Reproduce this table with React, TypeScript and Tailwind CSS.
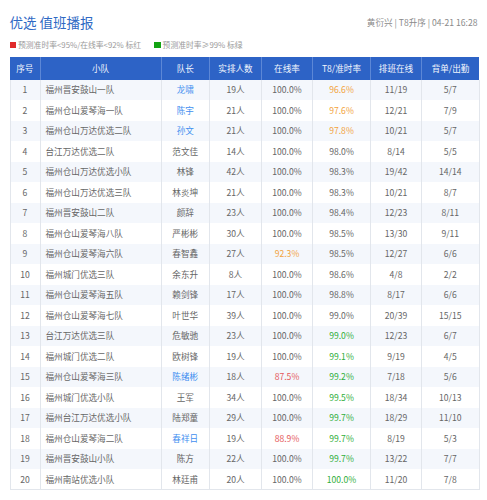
import React from "react";

type Row = {
  no: number;
  team: string;
  leader: string;
  leaderBlue?: boolean;
  people: string;
  online: string;
  onlineColor?: string;
  t8: string;
  t8Color?: string;
  shift: string;
  duty: string;
};

const rows: Row[] = [
  { no: 1, team: "福州晋安鼓山一队", leader: "龙啸", leaderBlue: true, people: "19人", online: "100.0%", t8: "96.6%", t8Color: "text-[#f2a33c]", shift: "11/19", duty: "5/7" },
  { no: 2, team: "福州仓山爱琴海一队", leader: "陈宇", leaderBlue: true, people: "21人", online: "100.0%", t8: "97.6%", t8Color: "text-[#f2a33c]", shift: "12/21", duty: "7/9" },
  { no: 3, team: "福州仓山万达优选二队", leader: "孙文", leaderBlue: true, people: "21人", online: "100.0%", t8: "97.8%", t8Color: "text-[#f2a33c]", shift: "10/21", duty: "5/7" },
  { no: 4, team: "台江万达优选二队", leader: "范文佳", people: "14人", online: "100.0%", t8: "98.0%", shift: "8/14", duty: "5/5" },
  { no: 5, team: "福州仓山万达优选小队", leader: "林锋", people: "42人", online: "100.0%", t8: "98.3%", shift: "19/42", duty: "14/14" },
  { no: 6, team: "福州仓山万达优选三队", leader: "林炎坤", people: "21人", online: "100.0%", t8: "98.3%", shift: "10/21", duty: "8/7" },
  { no: 7, team: "福州晋安鼓山二队", leader: "颜辞", people: "23人", online: "100.0%", t8: "98.4%", shift: "12/23", duty: "8/11" },
  { no: 8, team: "福州仓山爱琴海八队", leader: "严彬彬", people: "30人", online: "100.0%", t8: "98.5%", shift: "13/30", duty: "9/11" },
  { no: 9, team: "福州仓山爱琴海六队", leader: "春智鑫", people: "27人", online: "92.3%", onlineColor: "text-[#f2a33c]", t8: "98.5%", shift: "12/27", duty: "6/6" },
  { no: 10, team: "福州城门优选三队", leader: "余东升", people: "8人", online: "100.0%", t8: "98.6%", shift: "4/8", duty: "2/2" },
  { no: 11, team: "福州仓山爱琴海五队", leader: "赖剑锋", people: "17人", online: "100.0%", t8: "98.8%", shift: "8/17", duty: "6/6" },
  { no: 12, team: "福州仓山爱琴海七队", leader: "叶世华", people: "39人", online: "100.0%", t8: "99.0%", shift: "20/39", duty: "15/15" },
  { no: 13, team: "台江万达优选三队", leader: "危敏驰", people: "23人", online: "100.0%", t8: "99.0%", t8Color: "text-[#2fae3a]", shift: "12/23", duty: "6/7" },
  { no: 14, team: "福州城门优选二队", leader: "欧树锋", people: "19人", online: "100.0%", t8: "99.1%", t8Color: "text-[#2fae3a]", shift: "9/19", duty: "4/5" },
  { no: 15, team: "福州仓山爱琴海三队", leader: "陈绪彬", leaderBlue: true, people: "18人", online: "87.5%", onlineColor: "text-[#e5575a]", t8: "99.2%", t8Color: "text-[#2fae3a]", shift: "7/18", duty: "5/6" },
  { no: 16, team: "福州城门优选小队", leader: "王军", people: "34人", online: "100.0%", t8: "99.5%", t8Color: "text-[#2fae3a]", shift: "18/34", duty: "10/13" },
  { no: 17, team: "福州台江万达优选小队", leader: "陆郑童", people: "29人", online: "100.0%", t8: "99.7%", t8Color: "text-[#2fae3a]", shift: "18/29", duty: "11/10" },
  { no: 18, team: "福州仓山爱琴海二队", leader: "春祥日", leaderBlue: true, people: "19人", online: "88.9%", onlineColor: "text-[#e5575a]", t8: "99.7%", t8Color: "text-[#2fae3a]", shift: "8/19", duty: "5/3" },
  { no: 19, team: "福州晋安鼓山小队", leader: "陈方", people: "22人", online: "100.0%", t8: "99.7%", t8Color: "text-[#2fae3a]", shift: "13/22", duty: "7/7" },
  { no: 20, team: "福州南站优选小队", leader: "林廷甫", people: "20人", online: "100.0%", t8: "100.0%", t8Color: "text-[#2fae3a]", shift: "11/20", duty: "7/8" },
];

const headers = ["序号", "小队", "队长", "实排人数", "在线率", "T8/准时率", "排班在线", "背单/出勤"];
const widths = ["w-[30px]", "w-[121px]", "w-[48.5px]", "w-[52px]", "w-[51px]", "w-[58px]", "w-[51px]", "w-[57.5px]"];

const App = () => {
  return (
    <div className="w-[487px] h-[500px] bg-white px-[9.5px] pt-[13px] font-['Noto_Sans_CJK_SC','Noto_Sans',sans-serif]">
      {/* title */}
      <div className="flex items-center justify-between h-[19px]">
        <h1 className="text-[13.5px] leading-none text-[#2f69c4]">优选 值班播报</h1>
        <div className="text-[8.6px] leading-none text-[#8a8a8a]">黄衍兴 | T8升序 | 04-21 16:28</div>
      </div>

      {/* legend */}
      <div className="flex items-center h-[10px] mt-[8px] text-[7.8px] leading-none text-[#9a9a9a]">
        <span className="w-[6.5px] h-[6.5px] bg-[#e02a2a] mr-[2px]" />
        <span>预测准时率&lt;95%/在线率&lt;92% 标红</span>
        <span className="w-[6.5px] h-[6.5px] bg-[#13a313] ml-[13px] mr-[2px]" />
        <span>预测准时率≥99% 标绿</span>
      </div>

      <table className="mt-[6.5px] w-[469px] table-fixed border-collapse text-[8.6px] text-[#666]">
        <colgroup>
          {widths.map((w, i) => (
            <col key={i} className={w} />
          ))}
        </colgroup>
        <thead>
          <tr className="h-[23px] bg-[#2d63c6]">
            {headers.map((h, i) => (
              <th
                key={h}
                className={`font-normal text-[#f2f6fd] border-[#5c87d6] ${i < headers.length - 1 ? "border-r" : ""}`}
              >
                {h}
              </th>
            ))}
          </tr>
        </thead>
        <tbody className="border border-t-0 border-[#e2e6ec]">
          {rows.map((r, idx) => (
            <tr key={r.no} className={`h-[20.5px] ${idx % 2 === 0 ? "bg-[#f4f7fc]" : "bg-white"}`}>
              <td className="text-center border-r border-[#e2e6ec]">{r.no}</td>
              <td className="text-left pl-[5px] border-r border-[#e2e6ec] whitespace-nowrap">{r.team}</td>
              <td className={`text-center border-r border-[#e2e6ec] ${r.leaderBlue ? "text-[#3f8ff0]" : ""}`}>{r.leader}</td>
              <td className="text-center border-r border-[#e2e6ec]">{r.people}</td>
              <td className={`text-center border-r border-[#e2e6ec] ${r.onlineColor ?? ""}`}>{r.online}</td>
              <td className={`text-center border-r border-[#e2e6ec] ${r.t8Color ?? ""}`}>{r.t8}</td>
              <td className="text-center border-r border-[#e2e6ec]">{r.shift}</td>
              <td className="text-center">{r.duty}</td>
            </tr>
          ))}
        </tbody>
      </table>
    </div>
  );
};

export default App;
